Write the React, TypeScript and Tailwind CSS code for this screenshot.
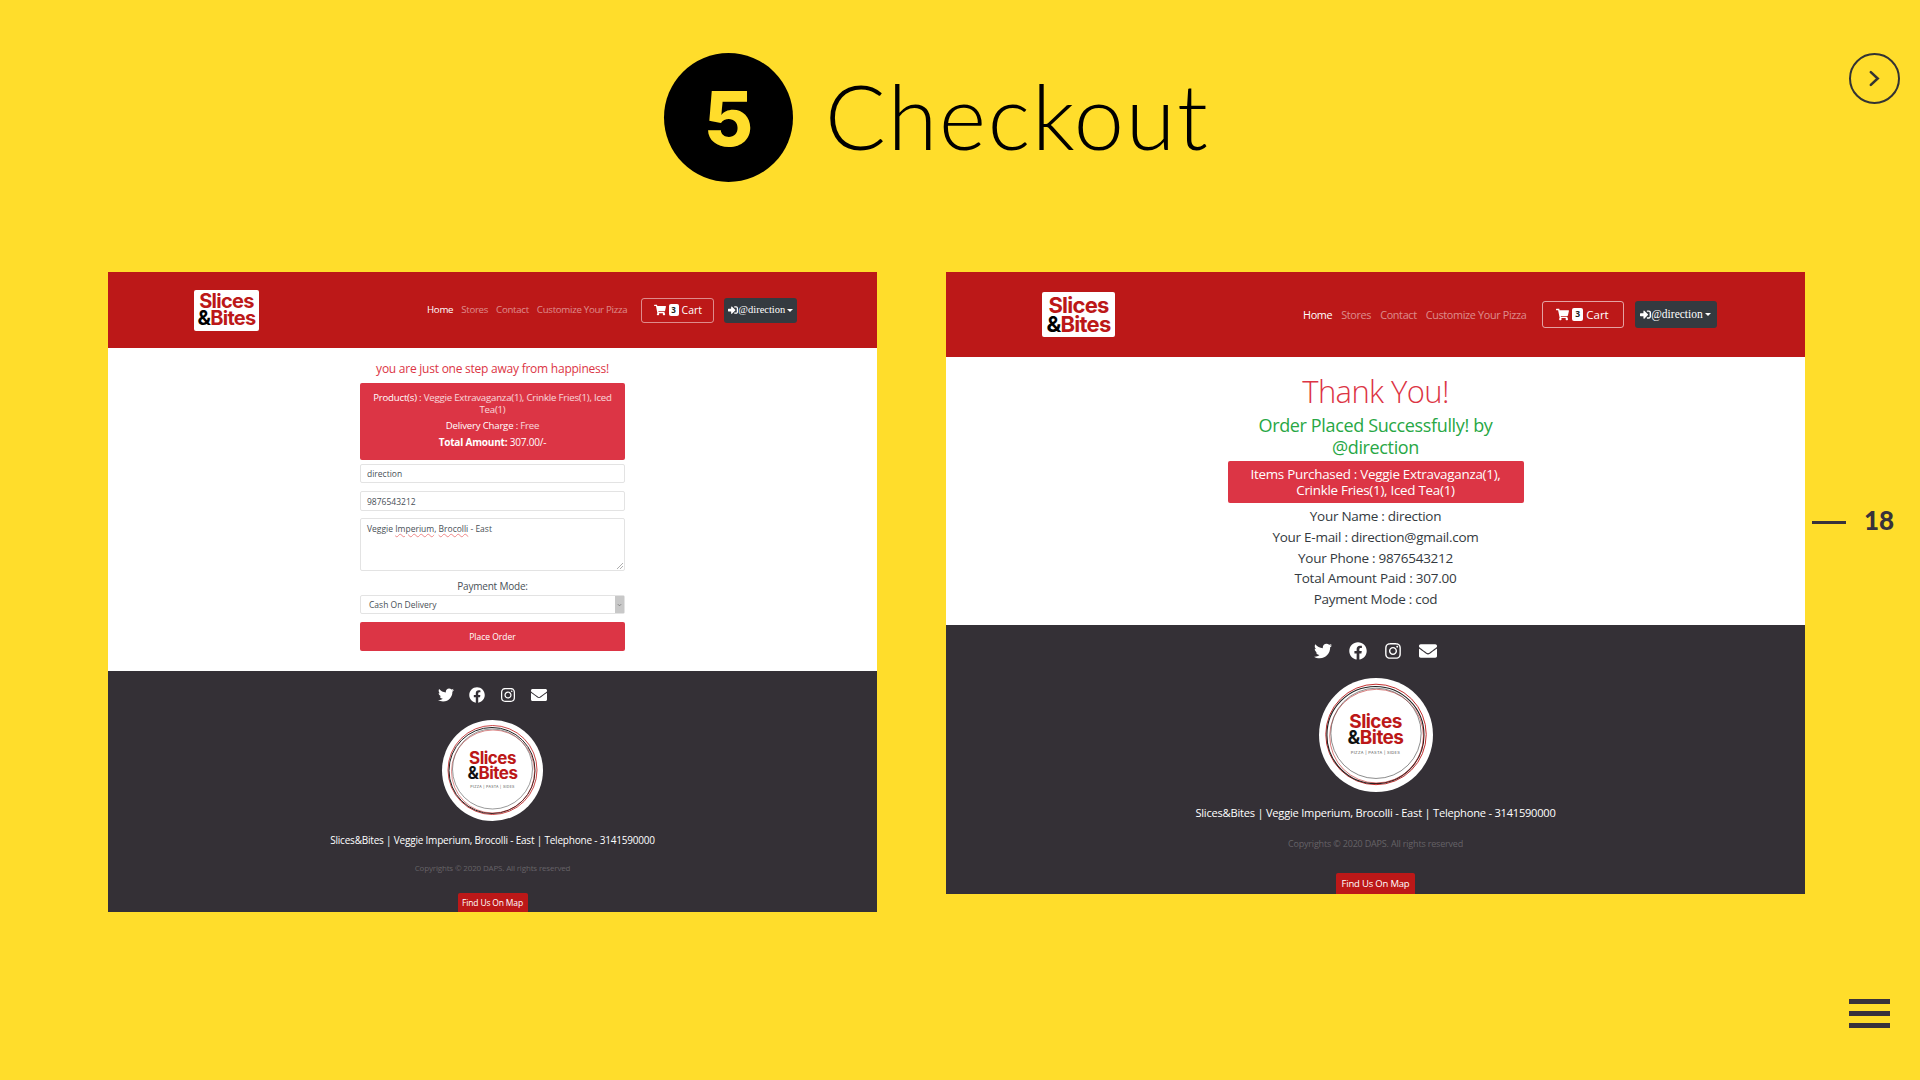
import { FaTwitter, FaFacebook, FaInstagram, FaEnvelope, FaShoppingCart, FaSignInAlt } from "react-icons/fa";

const sans = "font-['Open_Sans','Noto_Sans',sans-serif]";

function Rings() {
  return (
    <svg viewBox="0 0 101 101" className="absolute inset-0 w-full h-full">
      <circle cx="50.5" cy="50" r="44.5" fill="none" stroke="#bc1818" strokeWidth="0.8" />
      <circle cx="50" cy="50.5" r="43" fill="none" stroke="#222" strokeWidth="1" />
      <circle cx="51" cy="51.5" r="41.5" fill="none" stroke="#bc1818" strokeWidth="0.5" />
      <circle cx="50.5" cy="49" r="40" fill="none" stroke="#555" strokeWidth="0.6" />
    </svg>
  );
}

function LeftPanel() {
  return (
    <section className={`w-[769px] h-[640px] flex flex-col ${sans}`}>
      <header className="h-[76px] bg-[#bc1818] flex items-center pl-[86px] shrink-0">
        <div className="w-[65px] h-[41px] bg-white rounded-[2px] flex flex-col items-center justify-center font-['Inter'] font-bold text-[#bc1818] text-[20px] leading-[17px] tracking-[-0.035em]">
          <span>Slices</span>
          <span><span className="inline-block text-black">&amp;</span>Bites</span>
        </div>
        <nav className="ml-[168px] pt-[1px] flex items-center text-[9.7px] text-white/50 gap-[8px] tracking-[-0.03em]">
          <span className="text-white">Home</span>
          <span>Stores</span>
          <span>Contact</span>
          <span>Customize Your Pizza</span>
        </nav>
        <div className="ml-[14px] w-[73px] h-[25px] border border-white/50 rounded-[3px] flex items-center justify-center gap-[3px] text-[10.5px] text-white">
          <FaShoppingCart className="text-[12px]" />
          <span className="bg-white text-[#222] rounded-[2px] w-[10px] h-[12px] flex items-center justify-center text-[8px] font-bold">3</span>
          <span className="pt-[1px]">Cart</span>
        </div>
        <div className="ml-[10px] w-[73px] h-[25px] bg-[#343a40] rounded-[3px] flex items-center justify-center text-[10.5px] text-white font-['Liberation_Serif']">
          <FaSignInAlt className="text-[10px]" />
          <span>@direction</span>
          <span className="ml-[2px] border-x-[3px] border-t-[3px] border-x-transparent border-t-white" />
        </div>
      </header>
      <main className="h-[323px] bg-white flex flex-col items-center">
        <p className="mt-[13px] h-[16px] leading-[16px] text-[12px] text-[#dc3545] tracking-[-0.02em]">you are just one step away from happiness!</p>
        <div className="mt-[6px] w-[265px] h-[77px] bg-[#dc3545] rounded-[2px] text-white text-center text-[9.6px] leading-[12px] pt-[9px] px-[10px] tracking-[-0.02em]">
          <p>Product(s) : <span className="text-white/80">Veggie Extravaganza(1), Crinkle Fries(1), Iced Tea(1)</span></p>
          <p className="mt-[4px]">Delivery Charge : <span className="text-white/80">Free</span></p>
          <p className="mt-[4px] text-[10px]"><b>Total Amount:</b> 307.00/-</p>
        </div>
        <div className="mt-[4px] w-[265px] h-[19px] border border-[#e3e3e3] rounded-[2px] flex items-center px-[6px] pt-[2px] text-[8.5px] text-[#495057]">direction</div>
        <div className="mt-[8px] w-[265px] h-[20px] border border-[#e3e3e3] rounded-[2px] flex items-center px-[6px] pt-[2px] text-[8.5px] text-[#495057]">9876543212</div>
        <div className="mt-[7px] w-[265px] h-[53px] border border-[#e3e3e3] rounded-[2px] px-[6px] pt-[4px] text-[8.5px] leading-[12px] text-[#495057] relative">
          Veggie <span className="underline decoration-wavy decoration-[#e88] decoration-[0.5px]">Imperium</span>, <span className="underline decoration-wavy decoration-[#e88] decoration-[0.5px]">Brocolli</span> - East
          <svg viewBox="0 0 6 6" className="absolute right-[1px] bottom-[1px] w-[6px] h-[6px]"><path d="M0 6L6 0M3 6L6 3" stroke="#999" strokeWidth="0.8" /></svg>
        </div>
        <p className="mt-[8px] h-[14px] leading-[14px] text-[10px] text-[#495057] tracking-[-0.02em]">Payment Mode:</p>
        <div className="mt-[2px] w-[265px] h-[19px] border border-[#e3e3e3] rounded-[2px] flex items-center justify-between pl-[8px] text-[8.5px] text-[#495057]">
          <span className="pt-[2px]">Cash On Delivery</span>
          <span className="w-[9px] h-full bg-[#c8c8c8] flex items-center justify-center">
            <svg viewBox="0 0 6 4" className="w-[5px] h-[4px]"><path d="M1 1l2 2 2-2" fill="none" stroke="#777" /></svg>
          </span>
        </div>
        <div className="mt-[8px] w-[265px] h-[29px] bg-[#dc3545] rounded-[2px] flex items-center justify-center pt-[2px] text-[8.5px] text-white">Place Order</div>
      </main>
      <footer className="h-[241px] bg-[#343036] flex flex-col items-center text-white">
        <div className="mt-[16px] h-[16px] flex items-center gap-[15px] text-[16px]">
          <FaTwitter />
          <FaFacebook />
          <FaInstagram />
          <FaEnvelope />
        </div>
        <div className="relative mt-[17px] w-[101px] h-[101px] rounded-full bg-white flex flex-col items-center pt-[31px] font-['Inter'] font-bold text-[#bc1818] text-[17px] leading-[14.5px] tracking-[-0.03em]">
          <Rings />
          <span className="relative">Slices</span>
          <span className="relative"><span className="inline-block text-[#111]">&amp;</span>Bites</span>
          <span className="relative mt-[3px] text-[3.6px] leading-[8px] font-normal tracking-[0.08em] text-[#555]">PIZZA | PASTA | SIDES</span>
        </div>
        <p className="mt-[12px] h-[14px] leading-[14px] text-[10px] tracking-[-0.02em]">Slices&amp;Bites | Veggie Imperium, Brocolli - East | Telephone - 3141590000</p>
        <p className="mt-[16px] h-[10px] leading-[10px] text-[8px] text-white/25 tracking-[-0.02em]">Copyrights © 2020 DAPS. All rights reserved</p>
        <div className="mt-[20px] w-[70px] h-[19px] bg-[#bc1818] rounded-t-[2px] flex items-center justify-center pt-[2px] text-[8.5px] tracking-[-0.02em]">Find Us On Map</div>
      </footer>
    </section>
  );
}

function RightPanel() {
  return (
    <section className={`w-[859px] h-[622px] flex flex-col ${sans}`}>
      <header className="h-[85px] bg-[#bc1818] flex items-center pl-[96px] shrink-0">
        <div className="w-[73px] h-[45px] bg-white rounded-[2px] flex flex-col items-center justify-center font-['Inter'] font-bold text-[#bc1818] text-[22px] leading-[19px] tracking-[-0.035em]">
          <span>Slices</span>
          <span><span className="inline-block text-black">&amp;</span>Bites</span>
        </div>
        <nav className="ml-[188px] pt-[1px] flex items-center text-[10.8px] text-white/50 gap-[9px] tracking-[-0.03em]">
          <span className="text-white">Home</span>
          <span>Stores</span>
          <span>Contact</span>
          <span>Customize Your Pizza</span>
        </nav>
        <div className="ml-[15px] w-[82px] h-[27px] border border-white/60 rounded-[3px] flex items-center justify-center gap-[3px] text-[11.5px] text-white">
          <FaShoppingCart className="text-[13px]" />
          <span className="bg-white text-[#222] rounded-[2px] w-[11px] h-[13px] flex items-center justify-center text-[8.5px] font-bold">3</span>
          <span>Cart</span>
        </div>
        <div className="ml-[11px] w-[82px] h-[27px] bg-[#343a40] rounded-[3px] flex items-center justify-center text-[11.5px] text-white font-['Liberation_Serif']">
          <FaSignInAlt className="text-[11px]" />
          <span>@direction</span>
          <span className="ml-[2px] border-x-[3px] border-t-[3px] border-x-transparent border-t-white" />
        </div>
      </header>
      <main className="h-[268px] bg-white flex flex-col items-center">
        <h2 className="mt-[14px] h-[40px] leading-[40px] text-[31px] font-light text-[#dc3545] tracking-[-0.02em]">Thank You!</h2>
        <p className="mt-[4px] w-[260px] text-center text-[18px] leading-[21.5px] text-[#28a745] tracking-[-0.02em]">Order Placed Successfully! by @direction</p>
        <div className="mt-[3px] w-[296px] h-[42px] bg-[#dc3545] rounded-[2px] flex items-center justify-center text-center text-white text-[13.4px] leading-[16.5px] px-[15px] tracking-[-0.02em]">Items Purchased : Veggie Extravaganza(1), Crinkle Fries(1), Iced Tea(1)</div>
        <div className="mt-[3px] text-center text-[13.5px] leading-[20.8px] text-[#343a40] tracking-[-0.02em]">
          <p>Your Name : direction</p>
          <p>Your E-mail : direction@gmail.com</p>
          <p>Your Phone : 9876543212</p>
          <p>Total Amount Paid : 307.00</p>
          <p>Payment Mode : cod</p>
        </div>
      </main>
      <footer className="h-[269px] bg-[#343036] flex flex-col items-center text-white">
        <div className="mt-[17px] h-[18px] flex items-center gap-[17px] text-[18px]">
          <FaTwitter />
          <FaFacebook />
          <FaInstagram />
          <FaEnvelope />
        </div>
        <div className="relative mt-[18px] w-[114px] h-[114px] rounded-full bg-white flex flex-col items-center pt-[36px] font-['Inter'] font-bold text-[#bc1818] text-[19px] leading-[15.5px] tracking-[-0.03em]">
          <Rings />
          <span className="relative">Slices</span>
          <span className="relative"><span className="inline-block text-[#111]">&amp;</span>Bites</span>
          <span className="relative mt-[4px] text-[4px] leading-[8px] font-normal tracking-[0.08em] text-[#555]">PIZZA | PASTA | SIDES</span>
        </div>
        <p className="mt-[13px] h-[16px] leading-[16px] text-[11.1px] tracking-[-0.02em]">Slices&amp;Bites | Veggie Imperium, Brocolli - East | Telephone - 3141590000</p>
        <p className="mt-[17px] h-[12px] leading-[12px] text-[9px] text-white/25 tracking-[-0.02em]">Copyrights © 2020 DAPS. All rights reserved</p>
        <div className="mt-[23px] w-[79px] h-[21px] bg-[#bc1818] rounded-t-[2px] flex items-center justify-center pt-[2px] text-[9.5px] tracking-[-0.02em]">Find Us On Map</div>
      </footer>
    </section>
  );
}

export default function App() {
  return (
    <div className="w-[1920px] h-[1080px] overflow-hidden bg-[#ffdd2b] flex flex-col text-black">
      <div className="h-[272px] shrink-0 flex items-start pl-[664px] pr-[20px] pt-[53px]">
        <div className="w-[129px] h-[129px] rounded-full bg-black text-[#ffdd2b] flex items-center justify-center font-['Inter'] font-extrabold text-[76px] leading-none">5</div>
        <h1 className="ml-[32px] mt-[3px] font-['Lato'] font-light text-[90px] leading-[118px] tracking-[0.02em] text-black">Checkout</h1>
        <div className="ml-auto w-[51px] h-[51px] rounded-full border-2 border-[#333] flex items-center justify-center">
          <svg viewBox="0 0 12 18" className="w-[11px] h-[17px]"><path d="M2 2l7.5 7L2 16" fill="none" stroke="#333" strokeWidth="2.8" strokeLinecap="round" /></svg>
        </div>
      </div>
      <div className="flex items-start pl-[108px]">
        <LeftPanel />
        <div className="ml-[69px]"><RightPanel /></div>
        <div className="ml-[7px] mt-[236px] flex items-center h-[28px]">
          <span className="w-[34px] h-[3px] bg-[#38323b]" />
          <span className="ml-[18px] -mt-[4px] font-['Lato'] font-black text-[26px] text-[#38323b] leading-none">18</span>
        </div>
      </div>
      <div className="mt-auto pb-[52px] pr-[30px] flex flex-col items-end gap-[7px]">
        <span className="w-[41px] h-[5px] bg-[#38323b]" />
        <span className="w-[41px] h-[5px] bg-[#38323b]" />
        <span className="w-[41px] h-[5px] bg-[#38323b]" />
      </div>
    </div>
  );
}
